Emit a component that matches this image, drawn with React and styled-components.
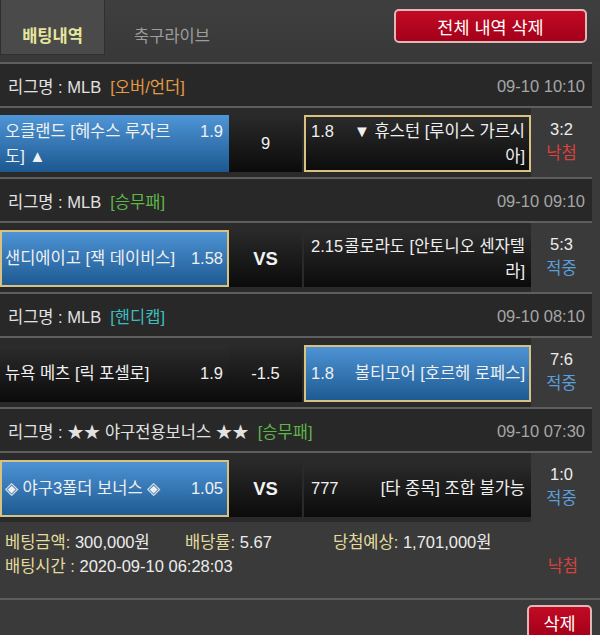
import React from "react"
import styled, { createGlobalStyle } from "styled-components"

const GlobalStyle = createGlobalStyle`
body {
    margin: 0;
    background: #3a3a3a;
    font-family: "Liberation Sans", "Noto Sans CJK KR", sans-serif;
    color: #ececec;
}
`

const matches = [
    {
        league: "MLB",
        type: "오버/언더",
        typeColor: "#e39a45",
        date: "09-10 10:10",
        home: { name: "오클랜드 [헤수스 루자르\n도] ▲", odds: "1.9", blue: true },
        mid: "9",
        away: { name: "▼ 휴스턴 [루이스 가르시\n아]", odds: "1.8", picked: true },
        score: "3:2",
        result: "낙첨",
    },
    {
        league: "MLB",
        type: "승무패",
        typeColor: "#5fb548",
        date: "09-10 09:10",
        home: { name: "샌디에이고 [잭 데이비스]", odds: "1.58", blue: true, picked: true },
        mid: "VS",
        away: { name: "콜로라도 [안토니오 센자텔\n라]", odds: "2.15", tight: true },
        score: "5:3",
        result: "적중",
    },
    {
        league: "MLB",
        type: "핸디캡",
        typeColor: "#3fbdbd",
        date: "09-10 08:10",
        home: { name: "뉴욕 메츠 [릭 포셀로]", odds: "1.9" },
        mid: "-1.5",
        away: { name: "볼티모어 [호르헤 로페스]", odds: "1.8", blue: true, picked: true },
        score: "7:6",
        result: "적중",
    },
    {
        league: "★★ 야구전용보너스 ★★",
        type: "승무패",
        typeColor: "#5fb548",
        date: "09-10 07:30",
        home: { name: "◈ 야구3폴더 보너스 ◈", odds: "1.05", blue: true, picked: true },
        mid: "VS",
        away: { name: "[타 종목] 조합 불가능", odds: "777" },
        score: "1:0",
        result: "적중",
    },
]

const App = () => {
    return (
        <Page>
            <GlobalStyle />
            <TabBar>
                <Tab $active>배팅내역</Tab>
                <Tab>축구라이브</Tab>
                <RedButton $wide>전체 내역 삭제</RedButton>
            </TabBar>

            {matches.map((m, i) => (
                <Section key={i}>
                    <LeagueHeader>
                        <LeagueName>
                            리그명 : {m.league}
                            <BetType $color={m.typeColor}>[{m.type}]</BetType>
                        </LeagueName>
                        <DateText>{m.date}</DateText>
                    </LeagueHeader>
                    <MatchRow>
                        <Cells>
                            <TeamCell $blue={m.home.blue} $picked={m.home.picked}>
                                <TeamText>
                                    <Odds $side="right">{m.home.odds}</Odds>
                                    {m.home.name}
                                </TeamText>
                            </TeamCell>
                            <MidCell $bold={m.mid === "VS"}>{m.mid}</MidCell>
                            <TeamCell $away $blue={m.away.blue} $picked={m.away.picked}>
                                <TeamText $away>
                                    <Odds $side="left" $tight={m.away.tight}>{m.away.odds}</Odds>
                                    {m.away.name}
                                </TeamText>
                            </TeamCell>
                        </Cells>
                        <ResultCol>
                            <Score>{m.score}</Score>
                            <Outcome $win={m.result === "적중"}>{m.result}</Outcome>
                        </ResultCol>
                    </MatchRow>
                </Section>
            ))}

            <Summary>
                <SummaryLine>
                    <span><Label>베팅금액:</Label> 300,000원</span>
                    <span><Label>배당률:</Label> 5.67</span>
                    <span><Label>당첨예상:</Label> 1,701,000원</span>
                </SummaryLine>
                <TimeLine>
                    <span><Label>배팅시간 :</Label> 2020-09-10 06:28:03</span>
                    <Outcome>낙첨</Outcome>
                </TimeLine>
            </Summary>

            <Footer>
                <RedButton>삭제</RedButton>
            </Footer>
        </Page>
    )
}

const Page = styled.div`
width: 600px;
height: 635px;
overflow: hidden;
background: #3a3a3a;
font-size: 16.5px;
`

const TabBar = styled.div`
display: flex;
align-items: flex-start;
height: 62px;
background: linear-gradient(#3f3f3f, #383838);
`

const Tab = styled.div`
box-sizing: border-box;
display: flex;
align-items: flex-end;
justify-content: center;
height: 55px;
padding-bottom: 7px;
width: ${p => p.$active ? "105px" : "134px"};
background: ${p => p.$active ? "#4a4a4a" : "transparent"};
border: 1px solid ${p => p.$active ? "#2f2f2f" : "transparent"};
border-top: none;
color: ${p => p.$active ? "#e6e69c" : "#9c9c9c"};
font-weight: ${p => p.$active ? "bold" : "normal"};
font-size: 16.5px;
`

const RedButton = styled.div`
box-sizing: border-box;
display: flex;
align-items: center;
justify-content: center;
width: ${p => p.$wide ? "193px" : "65px"};
height: 34px;
margin: ${p => p.$wide ? "9px 13px 0 auto" : "5px 8px 0 auto"};
background: linear-gradient(#c30a24, #a3001a);
border: 2px solid #dcb8b8;
border-radius: 5px;
color: #fff;
font-size: 17.5px;
`

const Section = styled.div`
width: 592px;
`

const LeagueHeader = styled.div`
box-sizing: border-box;
display: flex;
align-items: center;
justify-content: space-between;
height: 46px;
padding: 2px 7px 0 8px;
background: #282828;
border-top: 2px solid #5e5e5e;
border-bottom: 2px solid #5e5e5e;
`

const LeagueName = styled.div`
color: #e2e2e2;
`

const BetType = styled.span`
margin-left: 9px;
color: ${p => p.$color};
`

const DateText = styled.div`
color: #a6a6a6;
`

const MatchRow = styled.div`
display: flex;
height: 69px;
`

const Cells = styled.div`
display: flex;
width: 531px;
padding: 7px 0 5px;
background: #2a2a2a;
`

const TeamCell = styled.div`
box-sizing: border-box;
display: flex;
align-items: center;
width: ${p => p.$away ? "227px" : "229px"};
margin-left: ${p => p.$away ? "2px" : "0"};
padding: ${p => p.$away ? "0 6px 0 7px" : "0 6px 0 5px"};
background: ${p => p.$blue
    ? "linear-gradient(#4f95d7, #1c5890)"
    : "linear-gradient(#2c2c2c, #0b0b0b)"};
box-shadow: ${p => p.$picked ? "inset 0 0 0 2px #d9c27f" : "none"};
`

const TeamText = styled.div`
width: 100%;
line-height: 25px;
white-space: pre-line;
text-align: ${p => p.$away ? "right" : "left"};
color: #f0f0f0;
`

const Odds = styled.span`
float: ${p => p.$side};
margin-left: ${p => p.$side === "right" ? "6px" : "0"};
margin-right: ${p => p.$side === "left" ? (p.$tight ? "0" : "6px") : "0"};
`

const MidCell = styled.div`
display: flex;
align-items: center;
justify-content: center;
width: 73px;
background: linear-gradient(#2a2a2a, #0b0b0b);
font-size: ${p => p.$bold ? "18.5px" : "16.5px"};
font-weight: ${p => p.$bold ? "bold" : "normal"};
color: #f2f2f2;
`

const ResultCol = styled.div`
flex: 1;
display: flex;
flex-direction: column;
align-items: center;
justify-content: center;
line-height: 24px;
padding-bottom: 3px;
`

const Score = styled.div`
color: #ececec;
`

const Outcome = styled.div`
color: ${p => p.$win ? "#5a9fdc" : "#d9413f"};
`

const Summary = styled.div`
padding: 8px 22px 20px 5px;
line-height: 24px;
color: #ececec;
`

const SummaryLine = styled.div`
display: grid;
grid-template-columns: 180px 148px auto;
`

const TimeLine = styled.div`
display: flex;
justify-content: space-between;
`

const Label = styled.span`
color: #e4dc9c;
`

const Footer = styled.div`
display: flex;
border-top: 2px solid #5e5e5e;
`

export default App
